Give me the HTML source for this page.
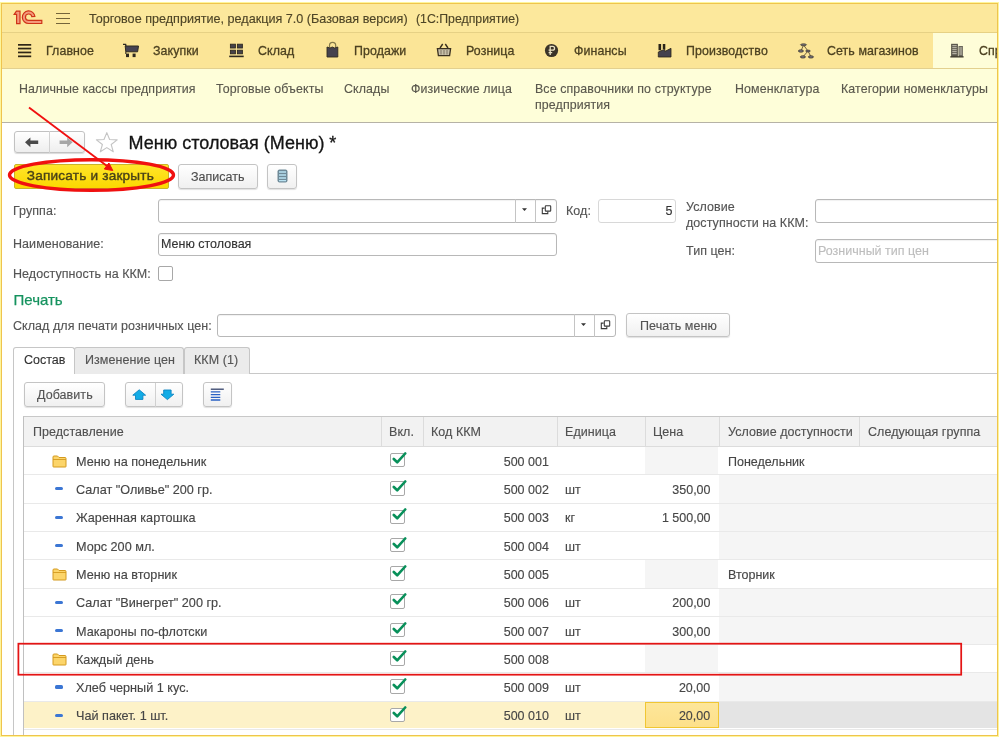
<!DOCTYPE html>
<html><head><meta charset="utf-8"><style>
html,body{margin:0;padding:0;background:#fff;}
body{width:1000px;height:740px;overflow:hidden;position:relative;font-family:"Liberation Sans", sans-serif;}
.t{position:absolute;white-space:nowrap;font-family:"Liberation Sans", sans-serif;-webkit-text-stroke:0.15px currentColor;}
.b{position:absolute;}
</style></head><body>
<div id="pg" style="position:absolute;left:0;top:0;width:1000px;height:740px;background:#fff;filter:blur(0.3px)">
<div style="position:absolute;left:0;top:0;width:997.5px;height:735px;overflow:hidden">
<div class="b" style="left:1px;top:3px;width:997px;height:29px;background:#fce89c;"></div>
<div class="b" style="left:1px;top:32px;width:997px;height:36px;background:#fbe597;"></div>
<div class="b" style="left:933px;top:32px;width:65px;height:36px;background:#fefdd8;"></div>
<div class="b" style="left:1px;top:68px;width:997px;height:54px;background:#fefed9;"></div>
<div class="b" style="left:1px;top:31.5px;width:997px;height:1px;background:#e6d185;"></div>
<div class="b" style="left:1px;top:67.5px;width:997px;height:1px;background:#e3d08f;"></div>
<div class="b" style="left:1px;top:121.7px;width:997px;height:1.2px;background:#b6b2a6;"></div>
<svg class="b" style="left:0;top:0" width="50" height="30" viewBox="0 0 50 30">
<g fill="#f49a7c" stroke="#cf3318" stroke-width="1.2" stroke-linejoin="miter">
<path d="M14.2 14.4 L16.4 11.1 H20 V23.6 H16.6 V14.4 Z"/>
<path d="M34.9 16.5 A6.3 6.3 0 1 0 28.7 23.5 H41.8 V20.4 H28.7 A3.2 3.2 0 1 1 31.8 16.6 Z"/>
</g></svg>
<div class="b" style="left:56px;top:12.5px;width:13.8px;height:1.6px;background:#74643a;"></div>
<div class="b" style="left:56px;top:17.5px;width:13.8px;height:1.6px;background:#74643a;"></div>
<div class="b" style="left:56px;top:22.5px;width:13.8px;height:1.6px;background:#74643a;"></div>
<div class="t" style="left:89px;top:9.87px;font-size:13.36px;line-height:17px;color:#4e4526;font-weight:normal;transform:scaleX(0.9434);transform-origin:left center;">Торговое предприятие, редакция 7.0 (Базовая версия)</div>
<div class="t" style="left:415.6px;top:9.98px;font-size:13.04px;line-height:17px;color:#4e4526;font-weight:normal;transform:scaleX(0.9434);transform-origin:left center;">(1С:Предприятие)</div>
<div class="t" style="left:46.3px;top:42.25px;font-size:13.14px;line-height:17px;color:#4c4120;font-weight:normal;transform:scaleX(0.9434);transform-origin:left center;-webkit-text-stroke:0.3px #4c4120;letter-spacing:0.1px;">Главное</div>
<div class="t" style="left:153px;top:42.25px;font-size:13.14px;line-height:17px;color:#4c4120;font-weight:normal;transform:scaleX(0.9434);transform-origin:left center;-webkit-text-stroke:0.3px #4c4120;letter-spacing:0.1px;">Закупки</div>
<div class="t" style="left:258.4px;top:42.25px;font-size:13.14px;line-height:17px;color:#4c4120;font-weight:normal;transform:scaleX(0.9434);transform-origin:left center;-webkit-text-stroke:0.3px #4c4120;letter-spacing:0.1px;">Склад</div>
<div class="t" style="left:354px;top:42.25px;font-size:13.14px;line-height:17px;color:#4c4120;font-weight:normal;transform:scaleX(0.9434);transform-origin:left center;-webkit-text-stroke:0.3px #4c4120;letter-spacing:0.1px;">Продажи</div>
<div class="t" style="left:466px;top:42.25px;font-size:13.14px;line-height:17px;color:#4c4120;font-weight:normal;transform:scaleX(0.9434);transform-origin:left center;-webkit-text-stroke:0.3px #4c4120;letter-spacing:0.1px;">Розница</div>
<div class="t" style="left:573.6px;top:42.25px;font-size:13.14px;line-height:17px;color:#4c4120;font-weight:normal;transform:scaleX(0.9434);transform-origin:left center;-webkit-text-stroke:0.3px #4c4120;letter-spacing:0.1px;">Финансы</div>
<div class="t" style="left:686px;top:42.25px;font-size:13.14px;line-height:17px;color:#4c4120;font-weight:normal;transform:scaleX(0.9434);transform-origin:left center;-webkit-text-stroke:0.3px #4c4120;letter-spacing:0.1px;">Производство</div>
<div class="t" style="left:827px;top:42.25px;font-size:13.14px;line-height:17px;color:#4c4120;font-weight:normal;transform:scaleX(0.9434);transform-origin:left center;-webkit-text-stroke:0.3px #4c4120;letter-spacing:0.1px;">Сеть магазинов</div>
<div class="t" style="left:979px;top:42.25px;font-size:13.14px;line-height:17px;color:#4c4120;font-weight:normal;transform:scaleX(0.9434);transform-origin:left center;-webkit-text-stroke:0.3px #4c4120;letter-spacing:0.1px;">Спр</div>
<svg class="b" style="left:0;top:0" width="1000" height="70" viewBox="0 0 1000 70">
<g fill="#2f2616"><rect x="18" y="44" width="13.2" height="1.7"/><rect x="18" y="47.7" width="13.2" height="1.7"/><rect x="18" y="51.6" width="13.2" height="1.7"/><rect x="18" y="55.5" width="13.2" height="1.7"/></g>
<path d="M123 44.4 H125.6 L126 46" fill="none" stroke="#2f2a20" stroke-width="1.4"/>
<path d="M125.2 46 H138.5 L137.6 51.8 H125.8 Z" fill="#454252" stroke="#2f2a20" stroke-width="1"/>
<path d="M125.8 51.8 V54" stroke="#2f2a20" stroke-width="1"/>
<rect x="126" y="53.6" width="3" height="3.5" fill="#2f2a20"/><rect x="132.6" y="53.6" width="3" height="3.5" fill="#2f2a20"/>
<g fill="#45424a" stroke="#2f2a20" stroke-width="0.9"><rect x="230.4" y="44.2" width="5" height="3.8"/><rect x="237.4" y="44.2" width="5" height="3.8"/><rect x="230.4" y="50.2" width="5" height="3.6"/><rect x="237.4" y="50.2" width="5" height="3.6"/></g>
<rect x="229.2" y="55.6" width="14.5" height="1.6" fill="#2f2a20"/>
<path d="M329.5 47.5 V45.5 A3.1 3.1 0 0 1 335.7 45.5 V47.5" fill="none" stroke="#857a4a" stroke-width="1.2"/>
<path d="M327 47 L330 48 L332.3 47 L334.6 48 L337.8 47 V57 H327 Z" fill="#45424e" stroke="#2f2a20" stroke-width="0.9"/>
<path d="M440 48 L442.7 44 M448 48 L445.3 44" stroke="#3a3020" stroke-width="1.4"/>
<path d="M437.4 48.6 H450.6 L449.6 55.6 H438.4 Z" fill="#c8c0a8" stroke="#3a3020" stroke-width="1.3"/>
<path d="M441 50 V54.5 M444 50 V54.5 M447 50 V54.5" stroke="#6a6050" stroke-width="0.8"/>
<circle cx="551.5" cy="50.5" r="6.6" fill="#3a3328"/>
<path d="M550.2 55 V46.3 H552.6 A1.9 1.9 0 0 1 552.6 50.2 H548.6 M548.6 52.6 H552.2" fill="none" stroke="#e8e0c0" stroke-width="1.3"/>
<path d="M658.3 57 V52 L664.8 49.2 V51.5 L671 48.3 V57 Z" fill="#45424e" stroke="#2a2418" stroke-width="0.8"/>
<rect x="658.5" y="44" width="2.6" height="6.3" fill="#2a2418"/><rect x="662.8" y="44" width="2.5" height="5" fill="#2a2418"/>
<path d="M803.5 45 L801 51 M803.5 45 L808 51 M808 51 L803 56.8 M808 51 L811 56.8" stroke="#4a4030" stroke-width="0.8"/>
<g fill="#77727a" stroke="#3a3428" stroke-width="0.7"><ellipse cx="803.5" cy="44.8" rx="3" ry="1"/><ellipse cx="800.9" cy="51" rx="2.6" ry="1.2"/><ellipse cx="808" cy="51" rx="2.4" ry="0.9"/><ellipse cx="802.9" cy="56.9" rx="2.6" ry="1.2"/><ellipse cx="810.9" cy="56.9" rx="2.6" ry="1.2"/></g>
<rect x="951.1" y="43.8" width="6.8" height="13" fill="#5a574c"/><rect x="958.5" y="46" width="4.4" height="10.8" fill="#6a675c"/>
<path d="M952.3 45.7 H956.7 M952.3 47.7 H956.7 M952.3 49.7 H956.7 M952.3 51.7 H956.7 M952.3 53.7 H956.7 M959.3 48 H962.1 M959.3 50 H962.1 M959.3 52 H962.1 M959.3 54 H962.1" stroke="#d8d4c4" stroke-width="0.9"/>
<rect x="950.3" y="56.2" width="13.3" height="1.3" fill="#3a3628"/>
</svg>
<div class="t" style="left:19px;top:80.15px;font-size:13.14px;line-height:17px;color:#5a584d;font-weight:normal;transform:scaleX(0.9434);transform-origin:left center;letter-spacing:0.12px;">Наличные кассы предприятия</div>
<div class="t" style="left:216px;top:80.15px;font-size:13.14px;line-height:17px;color:#5a584d;font-weight:normal;transform:scaleX(0.9434);transform-origin:left center;letter-spacing:0.12px;">Торговые объекты</div>
<div class="t" style="left:344px;top:80.15px;font-size:13.14px;line-height:17px;color:#5a584d;font-weight:normal;transform:scaleX(0.9434);transform-origin:left center;letter-spacing:0.12px;">Склады</div>
<div class="t" style="left:411px;top:80.15px;font-size:13.14px;line-height:17px;color:#5a584d;font-weight:normal;transform:scaleX(0.9434);transform-origin:left center;letter-spacing:0.12px;">Физические лица</div>
<div class="t" style="left:535px;top:80.15px;font-size:13.14px;line-height:17px;color:#5a584d;font-weight:normal;transform:scaleX(0.9434);transform-origin:left center;letter-spacing:0.12px;">Все справочники по структуре</div>
<div class="t" style="left:535px;top:95.55px;font-size:13.14px;line-height:17px;color:#5a584d;font-weight:normal;transform:scaleX(0.9434);transform-origin:left center;letter-spacing:0.12px;">предприятия</div>
<div class="t" style="left:735px;top:80.15px;font-size:13.14px;line-height:17px;color:#5a584d;font-weight:normal;transform:scaleX(0.9434);transform-origin:left center;letter-spacing:0.12px;">Номенклатура</div>
<div class="t" style="left:841px;top:80.15px;font-size:13.14px;line-height:17px;color:#5a584d;font-weight:normal;transform:scaleX(0.9434);transform-origin:left center;letter-spacing:0.12px;">Категории номенклатуры</div>
<div class="b" style="left:13.5px;top:130.5px;width:71px;height:22.7px;border:1px solid #c2c2c2;border-radius:3px;box-sizing:border-box;background:linear-gradient(#ffffff,#eeeeee);box-shadow:0 1px 1px rgba(0,0,0,0.15);"></div>
<div class="b" style="left:49.3px;top:131px;width:1px;height:21.7px;background:#d2d2d2;"></div>
<svg class="b" style="left:0;top:0" width="125" height="160" viewBox="0 0 125 160">
<path d="M25 142.3 L30.4 137.6 V140.6 H38.2 V144 H30.4 V147.2 Z" fill="#4a4a4a"/>
<path d="M72.6 142.3 L67.2 137.6 V140.6 H59.6 V144 H67.2 V147.2 Z" fill="#a6a6a6"/>
<path d="M106.8 132.6 L109.6 139.5 L117.2 139.9 L111.2 144.5 L113.3 151.8 L106.8 147.6 L100.3 151.8 L102.4 144.5 L96.4 139.9 L104 139.5 Z" fill="none" stroke="#c4c4c4" stroke-width="1.1" stroke-linejoin="round"/>
</svg>
<div class="t" style="left:128.6px;top:132.26px;font-size:18.00px;line-height:23px;color:#141414;font-weight:normal;-webkit-text-stroke:0.3px #141414;">Меню столовая (Меню) *</div>
<div class="b" style="left:13.5px;top:164px;width:155.5px;height:24.5px;border:1px solid #c9b42a;border-radius:2px;box-sizing:border-box;background:linear-gradient(#ffe52a,#fbd800);"></div>
<div class="t" style="left:26.8px;top:167.19px;font-size:13.60px;line-height:18px;color:#4a4318;font-weight:normal;-webkit-text-stroke:0.4px #4a4318;letter-spacing:0.2px;">Записать и закрыть</div>
<div class="b" style="left:178px;top:164px;width:80px;height:24.5px;border:1px solid #c4c4c4;border-radius:3px;box-sizing:border-box;background:linear-gradient(#ffffff,#f0f0f0);box-shadow:0 1px 1px rgba(0,0,0,0.12);"></div>
<div class="t" style="left:191px;top:167.91px;font-size:13.25px;line-height:17px;color:#4d4d4d;font-weight:normal;transform:scaleX(0.9434);transform-origin:left center;">Записать</div>
<div class="b" style="left:267px;top:164px;width:29.5px;height:24.5px;border:1px solid #c4c4c4;border-radius:3px;box-sizing:border-box;background:linear-gradient(#ffffff,#f0f0f0);box-shadow:0 1px 1px rgba(0,0,0,0.12);"></div>
<svg class="b" style="left:276.5px;top:169px" width="11" height="14" viewBox="0 0 11 14"><rect x="0.5" y="0.5" width="10" height="13" rx="2" fill="#6f8a98"/>
<path d="M2 3 H9 M2 6 H9 M2 9 H9 M2 11.6 H9" stroke="#b9e2f2" stroke-width="1.4"/></svg>
<div class="t" style="left:13px;top:202.41px;font-size:13.25px;line-height:17px;color:#545454;font-weight:normal;transform:scaleX(0.9434);transform-origin:left center;letter-spacing:0.06px;">Группа:</div>
<div class="b" style="left:157.5px;top:199px;width:399px;height:23.5px;border:1px solid #b8b8b8;border-radius:3px;box-sizing:border-box;background:#fff;box-shadow:inset 0 1px 1px rgba(0,0,0,0.06);"></div>
<div class="b" style="left:514.6px;top:199px;width:1px;height:23.5px;background:#c4c4c4;"></div>
<div class="b" style="left:535px;top:199px;width:1px;height:23.5px;background:#c4c4c4;"></div>
<svg class="b" style="left:508px;top:196px" width="60" height="30" viewBox="508 196 60 30"><path d="M522 208.2 H527 L524.5 211 Z" fill="#333"/><g fill="none" stroke="#3a3a3a" stroke-width="1.1"><rect x="545.3" y="205.7" width="5.4" height="5.4" rx="0.7"/><path d="M544.6 208.1 H542.3 V213.6 H547.8 V211.4"/></g></svg>
<div class="t" style="left:566px;top:202.41px;font-size:13.25px;line-height:17px;color:#545454;font-weight:normal;transform:scaleX(0.9434);transform-origin:left center;letter-spacing:0.06px;">Код:</div>
<div class="b" style="left:597.5px;top:199px;width:78.5px;height:23.5px;border:1px solid #d8d8d8;border-radius:3px;box-sizing:border-box;background:#fff;"></div>
<div class="t" style="right:325.50px;top:202.41px;font-size:13.25px;line-height:17px;color:#333;font-weight:normal;text-align:right;transform:scaleX(0.9434);transform-origin:right center;">5</div>
<div class="t" style="left:685.8px;top:197.91px;font-size:13.25px;line-height:17px;color:#545454;font-weight:normal;transform:scaleX(0.9434);transform-origin:left center;letter-spacing:0.06px;">Условие</div>
<div class="t" style="left:685.8px;top:214.41px;font-size:13.25px;line-height:17px;color:#545454;font-weight:normal;transform:scaleX(0.9434);transform-origin:left center;letter-spacing:0.06px;">доступности на ККМ:</div>
<div class="b" style="left:815px;top:199px;width:190px;height:23.5px;border:1px solid #b8b8b8;border-radius:3px;box-sizing:border-box;background:#fff;box-shadow:inset 0 1px 1px rgba(0,0,0,0.06);"></div>
<div class="t" style="left:13px;top:235.21px;font-size:13.25px;line-height:17px;color:#545454;font-weight:normal;transform:scaleX(0.9434);transform-origin:left center;letter-spacing:0.06px;">Наименование:</div>
<div class="b" style="left:157.5px;top:232.5px;width:399.5px;height:23.5px;border:1px solid #b8b8b8;border-radius:3px;box-sizing:border-box;background:#fff;box-shadow:inset 0 1px 1px rgba(0,0,0,0.06);"></div>
<div class="t" style="left:161px;top:235.21px;font-size:13.25px;line-height:17px;color:#333;font-weight:normal;transform:scaleX(0.9434);transform-origin:left center;">Меню столовая</div>
<div class="t" style="left:685.8px;top:242.41px;font-size:13.25px;line-height:17px;color:#545454;font-weight:normal;transform:scaleX(0.9434);transform-origin:left center;letter-spacing:0.06px;">Тип цен:</div>
<div class="b" style="left:815px;top:239px;width:190px;height:23.5px;border:1px solid #b8b8b8;border-radius:3px;box-sizing:border-box;background:#fff;box-shadow:inset 0 1px 1px rgba(0,0,0,0.06);"></div>
<div class="t" style="left:818px;top:242.41px;font-size:13.25px;line-height:17px;color:#bdbdbd;font-weight:normal;transform:scaleX(0.9434);transform-origin:left center;">Розничный тип цен</div>
<div class="t" style="left:13px;top:264.51px;font-size:13.25px;line-height:17px;color:#545454;font-weight:normal;transform:scaleX(0.9434);transform-origin:left center;letter-spacing:0.06px;">Недоступность на ККМ:</div>
<div class="b" style="left:157.5px;top:266px;width:15.5px;height:15px;border:1px solid #a8a8a8;border-radius:2px;box-sizing:border-box;background:#fff;"></div>
<div class="t" style="left:13.5px;top:289.80px;font-size:15.00px;line-height:20px;color:#16935f;font-weight:normal;-webkit-text-stroke:0.25px #16935f;">Печать</div>
<div class="t" style="left:13px;top:316.51px;font-size:13.25px;line-height:17px;color:#545454;font-weight:normal;transform:scaleX(0.9434);transform-origin:left center;letter-spacing:0.06px;">Склад для печати розничных цен:</div>
<div class="b" style="left:216.5px;top:313.5px;width:399px;height:23.5px;border:1px solid #b8b8b8;border-radius:3px;box-sizing:border-box;background:#fff;box-shadow:inset 0 1px 1px rgba(0,0,0,0.06);"></div>
<div class="b" style="left:573.8px;top:313.5px;width:1px;height:23.5px;background:#c4c4c4;"></div>
<div class="b" style="left:594.2px;top:313.5px;width:1px;height:23.5px;background:#c4c4c4;"></div>
<svg class="b" style="left:567.2px;top:310.8px" width="60" height="30" viewBox="508 196 60 30"><path d="M522 208.2 H527 L524.5 211 Z" fill="#333"/><g fill="none" stroke="#3a3a3a" stroke-width="1.1"><rect x="545.3" y="205.7" width="5.4" height="5.4" rx="0.7"/><path d="M544.6 208.1 H542.3 V213.6 H547.8 V211.4"/></g></svg>
<div class="b" style="left:626px;top:312.5px;width:103.5px;height:24.5px;border:1px solid #c4c4c4;border-radius:3px;box-sizing:border-box;background:linear-gradient(#ffffff,#f0f0f0);box-shadow:0 1px 1px rgba(0,0,0,0.12);"></div>
<div class="t" style="left:639.5px;top:316.91px;font-size:13.25px;line-height:17px;color:#545454;font-weight:normal;transform:scaleX(0.9434);transform-origin:left center;letter-spacing:0.06px;">Печать меню</div>
<div class="b" style="left:13.5px;top:373px;width:990px;height:1px;background:#c8c8c8;"></div>
<div class="b" style="left:12.9px;top:373px;width:1px;height:370px;background:#c6c6c6;"></div>
<div class="b" style="left:74.3px;top:347px;width:109.5px;height:26.5px;border:1px solid #c6c6c6;border-bottom:none;border-radius:3px 3px 0 0;box-sizing:border-box;background:#ebebeb;"></div>
<div class="b" style="left:184.3px;top:347px;width:65.5px;height:26.5px;border:1px solid #c6c6c6;border-bottom:none;border-radius:3px 3px 0 0;box-sizing:border-box;background:#ebebeb;"></div>
<div class="b" style="left:12.9px;top:347.3px;width:62.1px;height:27px;border:1px solid #c6c6c6;border-bottom:none;border-radius:3px 3px 0 0;box-sizing:border-box;background:#fff;"></div>
<div class="t" style="left:23.8px;top:351.11px;font-size:13.25px;line-height:17px;color:#333;font-weight:normal;transform:scaleX(0.9434);transform-origin:left center;">Состав</div>
<div class="t" style="left:85px;top:351.11px;font-size:13.25px;line-height:17px;color:#545454;font-weight:normal;transform:scaleX(0.9434);transform-origin:left center;letter-spacing:0.06px;">Изменение цен</div>
<div class="t" style="left:193.5px;top:351.11px;font-size:13.25px;line-height:17px;color:#545454;font-weight:normal;transform:scaleX(0.9434);transform-origin:left center;letter-spacing:0.06px;">ККМ (1)</div>
<div class="b" style="left:24px;top:382.2px;width:81.3px;height:25px;border:1px solid #c4c4c4;border-radius:3px;box-sizing:border-box;background:linear-gradient(#ffffff,#f0f0f0);box-shadow:0 1px 1px rgba(0,0,0,0.12);"></div>
<div class="t" style="left:37px;top:386.11px;font-size:13.25px;line-height:17px;color:#545454;font-weight:normal;transform:scaleX(0.9434);transform-origin:left center;letter-spacing:0.06px;">Добавить</div>
<div class="b" style="left:125.2px;top:382.2px;width:57.8px;height:25px;border:1px solid #c4c4c4;border-radius:3px;box-sizing:border-box;background:linear-gradient(#ffffff,#f0f0f0);box-shadow:0 1px 1px rgba(0,0,0,0.12);"></div>
<div class="b" style="left:154.5px;top:383px;width:1px;height:23.5px;background:#d0d0d0;"></div>
<div class="b" style="left:203.3px;top:382.2px;width:28.4px;height:25px;border:1px solid #c4c4c4;border-radius:3px;box-sizing:border-box;background:linear-gradient(#ffffff,#f0f0f0);box-shadow:0 1px 1px rgba(0,0,0,0.12);"></div>
<svg class="b" style="left:0;top:0" width="240" height="410" viewBox="0 0 240 410">
<path d="M139.2 389.8 L145.6 395.2 H142.9 V399.4 H135.5 V395.2 H132.8 Z" fill="#12ace6" stroke="#0b84c2" stroke-width="0.9" stroke-linejoin="round"/>
<path d="M167.4 399.6 L173.8 394.2 H171.1 V390 H163.7 V394.2 H161 Z" fill="#12ace6" stroke="#0b84c2" stroke-width="0.9" stroke-linejoin="round"/>
<path d="M210.8 389.2 H223.8" stroke="#33416a" stroke-width="1.3"/>
<path d="M210.8 391.9 H220.3 M210.8 394.6 H220.3 M210.8 397.3 H220.3 M210.8 400 H220.3" stroke="#2a62c4" stroke-width="1.3"/>
</svg>
<div class="b" style="left:23.4px;top:416px;width:980px;height:320px;border-left:1px solid #c0c0c0;border-top:1px solid #c8c8c8;box-sizing:border-box;background:#fff;"></div>
<div class="b" style="left:24.4px;top:417px;width:975px;height:29px;background:#f2f2f2;"></div>
<div class="b" style="left:24.4px;top:446px;width:975px;height:1px;background:#dcdcdc;"></div>
<div class="b" style="left:380.5px;top:417px;width:1px;height:29px;background:#dcdcdc;"></div>
<div class="b" style="left:422.5px;top:417px;width:1px;height:29px;background:#dcdcdc;"></div>
<div class="b" style="left:557.3px;top:417px;width:1px;height:29px;background:#dcdcdc;"></div>
<div class="b" style="left:644.8px;top:417px;width:1px;height:29px;background:#dcdcdc;"></div>
<div class="b" style="left:718.5px;top:417px;width:1px;height:29px;background:#dcdcdc;"></div>
<div class="b" style="left:858.9px;top:417px;width:1px;height:29px;background:#dcdcdc;"></div>
<div class="t" style="left:32.5px;top:423.11px;font-size:13.25px;line-height:17px;color:#505050;font-weight:normal;transform:scaleX(0.9434);transform-origin:left center;letter-spacing:0.05px;">Представление</div>
<div class="t" style="left:389px;top:423.11px;font-size:13.25px;line-height:17px;color:#505050;font-weight:normal;transform:scaleX(0.9434);transform-origin:left center;letter-spacing:0.05px;">Вкл.</div>
<div class="t" style="left:431px;top:423.11px;font-size:13.25px;line-height:17px;color:#505050;font-weight:normal;transform:scaleX(0.9434);transform-origin:left center;letter-spacing:0.05px;">Код ККМ</div>
<div class="t" style="left:565.3px;top:423.11px;font-size:13.25px;line-height:17px;color:#505050;font-weight:normal;transform:scaleX(0.9434);transform-origin:left center;letter-spacing:0.05px;">Единица</div>
<div class="t" style="left:652.8px;top:423.11px;font-size:13.25px;line-height:17px;color:#505050;font-weight:normal;transform:scaleX(0.9434);transform-origin:left center;letter-spacing:0.05px;">Цена</div>
<div class="t" style="left:727.5px;top:423.11px;font-size:13.25px;line-height:17px;color:#505050;font-weight:normal;transform:scaleX(0.9434);transform-origin:left center;letter-spacing:0.05px;">Условие доступности</div>
<div class="t" style="left:867.9px;top:423.11px;font-size:13.25px;line-height:17px;color:#505050;font-weight:normal;transform:scaleX(0.9434);transform-origin:left center;letter-spacing:0.05px;">Следующая группа</div>
<div class="b" style="left:644.8px;top:446.5px;width:73.7px;height:28.3px;background:#f5f5f5;"></div>
<svg class="b" style="left:51.5px;top:454.80px" width="15" height="13" viewBox="0 0 15 13"><path d="M1 11.5 V2 Q1 1 2 1 H5.5 L7 2.5 H13 Q14 2.5 14 3.5 V11.5 Q14 12 13.5 12 H1.5 Q1 12 1 11.5 Z" fill="#fcd56a" stroke="#d49a1e" stroke-width="1"/><path d="M1 4.5 H14" stroke="#d49a1e" stroke-width="0.9"/></svg>
<div class="t" style="left:76.2px;top:452.70px;font-size:13.41px;line-height:17px;color:#464646;font-weight:normal;transform:scaleX(0.9434);transform-origin:left center;">Меню на понедельник</div>
<div class="b" style="left:390px;top:452.9px;width:14.5px;height:14.5px;border:1px solid #a8a8a8;border-radius:2px;box-sizing:border-box;background:#fff;"></div>
<svg class="b" style="left:392px;top:451.70px" width="15" height="13" viewBox="0 0 15 13"><path d="M1.8 7 L5.2 10.3 L13.2 1.5" fill="none" stroke="#08905a" stroke-width="2.6" stroke-linecap="round" stroke-linejoin="round"/></svg>
<div class="t" style="right:449.00px;top:452.76px;font-size:13.25px;line-height:17px;color:#464646;font-weight:normal;text-align:right;transform:scaleX(0.9434);transform-origin:right center;">500 001</div>
<div class="t" style="left:727.5px;top:452.76px;font-size:13.25px;line-height:17px;color:#464646;font-weight:normal;transform:scaleX(0.9434);transform-origin:left center;">Понедельник</div>
<div class="b" style="left:718.5px;top:474.8px;width:280px;height:28.3px;background:#f5f5f5;"></div>
<div class="b" style="left:54.8px;top:487.3px;width:8.6px;height:3.2px;background:#3b76d4;border-radius:1.5px;"></div>
<div class="t" style="left:76.2px;top:481.00px;font-size:13.41px;line-height:17px;color:#464646;font-weight:normal;transform:scaleX(0.9434);transform-origin:left center;">Салат "Оливье" 200 гр.</div>
<div class="b" style="left:390px;top:481.2px;width:14.5px;height:14.5px;border:1px solid #a8a8a8;border-radius:2px;box-sizing:border-box;background:#fff;"></div>
<svg class="b" style="left:392px;top:480.00px" width="15" height="13" viewBox="0 0 15 13"><path d="M1.8 7 L5.2 10.3 L13.2 1.5" fill="none" stroke="#08905a" stroke-width="2.6" stroke-linecap="round" stroke-linejoin="round"/></svg>
<div class="t" style="right:449.00px;top:481.06px;font-size:13.25px;line-height:17px;color:#464646;font-weight:normal;text-align:right;transform:scaleX(0.9434);transform-origin:right center;">500 002</div>
<div class="t" style="left:565.3px;top:481.06px;font-size:13.25px;line-height:17px;color:#464646;font-weight:normal;transform:scaleX(0.9434);transform-origin:left center;">шт</div>
<div class="t" style="right:287.00px;top:481.06px;font-size:13.25px;line-height:17px;color:#464646;font-weight:normal;text-align:right;transform:scaleX(0.9434);transform-origin:right center;">350,00</div>
<div class="b" style="left:718.5px;top:503.1px;width:280px;height:28.3px;background:#f5f5f5;"></div>
<div class="b" style="left:54.8px;top:515.6px;width:8.6px;height:3.2px;background:#3b76d4;border-radius:1.5px;"></div>
<div class="t" style="left:76.2px;top:509.30px;font-size:13.41px;line-height:17px;color:#464646;font-weight:normal;transform:scaleX(0.9434);transform-origin:left center;">Жаренная картошка</div>
<div class="b" style="left:390px;top:509.5px;width:14.5px;height:14.5px;border:1px solid #a8a8a8;border-radius:2px;box-sizing:border-box;background:#fff;"></div>
<svg class="b" style="left:392px;top:508.30px" width="15" height="13" viewBox="0 0 15 13"><path d="M1.8 7 L5.2 10.3 L13.2 1.5" fill="none" stroke="#08905a" stroke-width="2.6" stroke-linecap="round" stroke-linejoin="round"/></svg>
<div class="t" style="right:449.00px;top:509.36px;font-size:13.25px;line-height:17px;color:#464646;font-weight:normal;text-align:right;transform:scaleX(0.9434);transform-origin:right center;">500 003</div>
<div class="t" style="left:565.3px;top:509.36px;font-size:13.25px;line-height:17px;color:#464646;font-weight:normal;transform:scaleX(0.9434);transform-origin:left center;">кг</div>
<div class="t" style="right:287.00px;top:509.36px;font-size:13.25px;line-height:17px;color:#464646;font-weight:normal;text-align:right;transform:scaleX(0.9434);transform-origin:right center;">1 500,00</div>
<div class="b" style="left:718.5px;top:531.4px;width:280px;height:28.3px;background:#f5f5f5;"></div>
<div class="b" style="left:54.8px;top:543.9px;width:8.6px;height:3.2px;background:#3b76d4;border-radius:1.5px;"></div>
<div class="t" style="left:76.2px;top:537.60px;font-size:13.41px;line-height:17px;color:#464646;font-weight:normal;transform:scaleX(0.9434);transform-origin:left center;">Морс 200 мл.</div>
<div class="b" style="left:390px;top:537.8px;width:14.5px;height:14.5px;border:1px solid #a8a8a8;border-radius:2px;box-sizing:border-box;background:#fff;"></div>
<svg class="b" style="left:392px;top:536.60px" width="15" height="13" viewBox="0 0 15 13"><path d="M1.8 7 L5.2 10.3 L13.2 1.5" fill="none" stroke="#08905a" stroke-width="2.6" stroke-linecap="round" stroke-linejoin="round"/></svg>
<div class="t" style="right:449.00px;top:537.66px;font-size:13.25px;line-height:17px;color:#464646;font-weight:normal;text-align:right;transform:scaleX(0.9434);transform-origin:right center;">500 004</div>
<div class="t" style="left:565.3px;top:537.66px;font-size:13.25px;line-height:17px;color:#464646;font-weight:normal;transform:scaleX(0.9434);transform-origin:left center;">шт</div>
<div class="b" style="left:644.8px;top:559.7px;width:73.7px;height:28.3px;background:#f5f5f5;"></div>
<svg class="b" style="left:51.5px;top:568.00px" width="15" height="13" viewBox="0 0 15 13"><path d="M1 11.5 V2 Q1 1 2 1 H5.5 L7 2.5 H13 Q14 2.5 14 3.5 V11.5 Q14 12 13.5 12 H1.5 Q1 12 1 11.5 Z" fill="#fcd56a" stroke="#d49a1e" stroke-width="1"/><path d="M1 4.5 H14" stroke="#d49a1e" stroke-width="0.9"/></svg>
<div class="t" style="left:76.2px;top:565.90px;font-size:13.41px;line-height:17px;color:#464646;font-weight:normal;transform:scaleX(0.9434);transform-origin:left center;">Меню на вторник</div>
<div class="b" style="left:390px;top:566.1px;width:14.5px;height:14.5px;border:1px solid #a8a8a8;border-radius:2px;box-sizing:border-box;background:#fff;"></div>
<svg class="b" style="left:392px;top:564.90px" width="15" height="13" viewBox="0 0 15 13"><path d="M1.8 7 L5.2 10.3 L13.2 1.5" fill="none" stroke="#08905a" stroke-width="2.6" stroke-linecap="round" stroke-linejoin="round"/></svg>
<div class="t" style="right:449.00px;top:565.96px;font-size:13.25px;line-height:17px;color:#464646;font-weight:normal;text-align:right;transform:scaleX(0.9434);transform-origin:right center;">500 005</div>
<div class="t" style="left:727.5px;top:565.96px;font-size:13.25px;line-height:17px;color:#464646;font-weight:normal;transform:scaleX(0.9434);transform-origin:left center;">Вторник</div>
<div class="b" style="left:718.5px;top:588.0px;width:280px;height:28.3px;background:#f5f5f5;"></div>
<div class="b" style="left:54.8px;top:600.5px;width:8.6px;height:3.2px;background:#3b76d4;border-radius:1.5px;"></div>
<div class="t" style="left:76.2px;top:594.20px;font-size:13.41px;line-height:17px;color:#464646;font-weight:normal;transform:scaleX(0.9434);transform-origin:left center;">Салат "Винегрет" 200 гр.</div>
<div class="b" style="left:390px;top:594.4px;width:14.5px;height:14.5px;border:1px solid #a8a8a8;border-radius:2px;box-sizing:border-box;background:#fff;"></div>
<svg class="b" style="left:392px;top:593.20px" width="15" height="13" viewBox="0 0 15 13"><path d="M1.8 7 L5.2 10.3 L13.2 1.5" fill="none" stroke="#08905a" stroke-width="2.6" stroke-linecap="round" stroke-linejoin="round"/></svg>
<div class="t" style="right:449.00px;top:594.26px;font-size:13.25px;line-height:17px;color:#464646;font-weight:normal;text-align:right;transform:scaleX(0.9434);transform-origin:right center;">500 006</div>
<div class="t" style="left:565.3px;top:594.26px;font-size:13.25px;line-height:17px;color:#464646;font-weight:normal;transform:scaleX(0.9434);transform-origin:left center;">шт</div>
<div class="t" style="right:287.00px;top:594.26px;font-size:13.25px;line-height:17px;color:#464646;font-weight:normal;text-align:right;transform:scaleX(0.9434);transform-origin:right center;">200,00</div>
<div class="b" style="left:718.5px;top:616.3px;width:280px;height:28.3px;background:#f5f5f5;"></div>
<div class="b" style="left:54.8px;top:628.8px;width:8.6px;height:3.2px;background:#3b76d4;border-radius:1.5px;"></div>
<div class="t" style="left:76.2px;top:622.50px;font-size:13.41px;line-height:17px;color:#464646;font-weight:normal;transform:scaleX(0.9434);transform-origin:left center;">Макароны по-флотски</div>
<div class="b" style="left:390px;top:622.6999999999999px;width:14.5px;height:14.5px;border:1px solid #a8a8a8;border-radius:2px;box-sizing:border-box;background:#fff;"></div>
<svg class="b" style="left:392px;top:621.50px" width="15" height="13" viewBox="0 0 15 13"><path d="M1.8 7 L5.2 10.3 L13.2 1.5" fill="none" stroke="#08905a" stroke-width="2.6" stroke-linecap="round" stroke-linejoin="round"/></svg>
<div class="t" style="right:449.00px;top:622.56px;font-size:13.25px;line-height:17px;color:#464646;font-weight:normal;text-align:right;transform:scaleX(0.9434);transform-origin:right center;">500 007</div>
<div class="t" style="left:565.3px;top:622.56px;font-size:13.25px;line-height:17px;color:#464646;font-weight:normal;transform:scaleX(0.9434);transform-origin:left center;">шт</div>
<div class="t" style="right:287.00px;top:622.56px;font-size:13.25px;line-height:17px;color:#464646;font-weight:normal;text-align:right;transform:scaleX(0.9434);transform-origin:right center;">300,00</div>
<div class="b" style="left:644.8px;top:644.6px;width:73.7px;height:28.3px;background:#f5f5f5;"></div>
<svg class="b" style="left:51.5px;top:652.90px" width="15" height="13" viewBox="0 0 15 13"><path d="M1 11.5 V2 Q1 1 2 1 H5.5 L7 2.5 H13 Q14 2.5 14 3.5 V11.5 Q14 12 13.5 12 H1.5 Q1 12 1 11.5 Z" fill="#fcd56a" stroke="#d49a1e" stroke-width="1"/><path d="M1 4.5 H14" stroke="#d49a1e" stroke-width="0.9"/></svg>
<div class="t" style="left:76.2px;top:650.80px;font-size:13.41px;line-height:17px;color:#464646;font-weight:normal;transform:scaleX(0.9434);transform-origin:left center;">Каждый день</div>
<div class="b" style="left:390px;top:651.0px;width:14.5px;height:14.5px;border:1px solid #a8a8a8;border-radius:2px;box-sizing:border-box;background:#fff;"></div>
<svg class="b" style="left:392px;top:649.80px" width="15" height="13" viewBox="0 0 15 13"><path d="M1.8 7 L5.2 10.3 L13.2 1.5" fill="none" stroke="#08905a" stroke-width="2.6" stroke-linecap="round" stroke-linejoin="round"/></svg>
<div class="t" style="right:449.00px;top:650.86px;font-size:13.25px;line-height:17px;color:#464646;font-weight:normal;text-align:right;transform:scaleX(0.9434);transform-origin:right center;">500 008</div>
<div class="b" style="left:718.5px;top:672.9px;width:280px;height:28.3px;background:#f5f5f5;"></div>
<div class="b" style="left:54.8px;top:685.4px;width:8.6px;height:3.2px;background:#3b76d4;border-radius:1.5px;"></div>
<div class="t" style="left:76.2px;top:679.10px;font-size:13.41px;line-height:17px;color:#464646;font-weight:normal;transform:scaleX(0.9434);transform-origin:left center;">Хлеб черный 1 кус.</div>
<div class="b" style="left:390px;top:679.3px;width:14.5px;height:14.5px;border:1px solid #a8a8a8;border-radius:2px;box-sizing:border-box;background:#fff;"></div>
<svg class="b" style="left:392px;top:678.10px" width="15" height="13" viewBox="0 0 15 13"><path d="M1.8 7 L5.2 10.3 L13.2 1.5" fill="none" stroke="#08905a" stroke-width="2.6" stroke-linecap="round" stroke-linejoin="round"/></svg>
<div class="t" style="right:449.00px;top:679.16px;font-size:13.25px;line-height:17px;color:#464646;font-weight:normal;text-align:right;transform:scaleX(0.9434);transform-origin:right center;">500 009</div>
<div class="t" style="left:565.3px;top:679.16px;font-size:13.25px;line-height:17px;color:#464646;font-weight:normal;transform:scaleX(0.9434);transform-origin:left center;">шт</div>
<div class="t" style="right:287.00px;top:679.16px;font-size:13.25px;line-height:17px;color:#464646;font-weight:normal;text-align:right;transform:scaleX(0.9434);transform-origin:right center;">20,00</div>
<div class="b" style="left:24.4px;top:701.7px;width:620.4px;height:26.8px;background:#fdf2c8;"></div>
<div class="b" style="left:718.5px;top:701.7px;width:280px;height:26.8px;background:#e4e4e4;"></div>
<div class="b" style="left:645px;top:702.2px;width:73.5px;height:25.8px;border:1.5px solid #f0c633;box-sizing:border-box;background:linear-gradient(#fde69a,#fde08a);"></div>
<div class="b" style="left:54.8px;top:713.7px;width:8.6px;height:3.2px;background:#3b76d4;border-radius:1.5px;"></div>
<div class="t" style="left:76.2px;top:707.40px;font-size:13.41px;line-height:17px;color:#464646;font-weight:normal;transform:scaleX(0.9434);transform-origin:left center;">Чай пакет. 1 шт.</div>
<div class="b" style="left:390px;top:707.6px;width:14.5px;height:14.5px;border:1px solid #a8a8a8;border-radius:2px;box-sizing:border-box;background:#fff;"></div>
<svg class="b" style="left:392px;top:706.40px" width="15" height="13" viewBox="0 0 15 13"><path d="M1.8 7 L5.2 10.3 L13.2 1.5" fill="none" stroke="#08905a" stroke-width="2.6" stroke-linecap="round" stroke-linejoin="round"/></svg>
<div class="t" style="right:449.00px;top:707.46px;font-size:13.25px;line-height:17px;color:#464646;font-weight:normal;text-align:right;transform:scaleX(0.9434);transform-origin:right center;">500 010</div>
<div class="t" style="left:565.3px;top:707.46px;font-size:13.25px;line-height:17px;color:#464646;font-weight:normal;transform:scaleX(0.9434);transform-origin:left center;">шт</div>
<div class="t" style="right:287.00px;top:707.46px;font-size:13.25px;line-height:17px;color:#464646;font-weight:normal;text-align:right;transform:scaleX(0.9434);transform-origin:right center;">20,00</div>
<div class="b" style="left:24.4px;top:474.3px;width:975px;height:1px;background:#e9e9e9;"></div>
<div class="b" style="left:24.4px;top:502.6px;width:975px;height:1px;background:#e9e9e9;"></div>
<div class="b" style="left:24.4px;top:530.9px;width:975px;height:1px;background:#e9e9e9;"></div>
<div class="b" style="left:24.4px;top:559.1999999999999px;width:975px;height:1px;background:#e9e9e9;"></div>
<div class="b" style="left:24.4px;top:587.5px;width:975px;height:1px;background:#e9e9e9;"></div>
<div class="b" style="left:24.4px;top:615.8px;width:975px;height:1px;background:#e9e9e9;"></div>
<div class="b" style="left:24.4px;top:644.0999999999999px;width:975px;height:1px;background:#e9e9e9;"></div>
<div class="b" style="left:24.4px;top:672.4px;width:975px;height:1px;background:#e9e9e9;"></div>
<div class="b" style="left:24.4px;top:700.6999999999999px;width:975px;height:1px;background:#e9e9e9;"></div>
<div class="b" style="left:24.4px;top:729.0px;width:975px;height:1px;background:#e9e9e9;"></div>
<svg class="b" style="left:0;top:0" width="1000" height="740" viewBox="0 0 1000 740">
<ellipse cx="91.5" cy="175" rx="82" ry="15.3" fill="none" stroke="#f01010" stroke-width="3.4"/>
<path d="M29 107.5 L107 166" stroke="#f01010" stroke-width="1.9"/>
<path d="M112.8 170.5 L104.3 169 L108.9 163 Z" fill="#f01010" stroke="#f01010" stroke-width="1"/>
<rect x="18.4" y="643.7" width="942.8" height="31" fill="none" stroke="#e41414" stroke-width="1.75"/>
</svg>
</div>
<div class="b" style="left:0;top:2px;width:999px;height:734.5px;border:1px solid #fdf59c;box-sizing:border-box;"></div><div class="b" style="left:1px;top:3px;width:997px;height:732.5px;border:1.1px solid #efc44e;box-sizing:border-box;"></div>
</div>
</body></html>
